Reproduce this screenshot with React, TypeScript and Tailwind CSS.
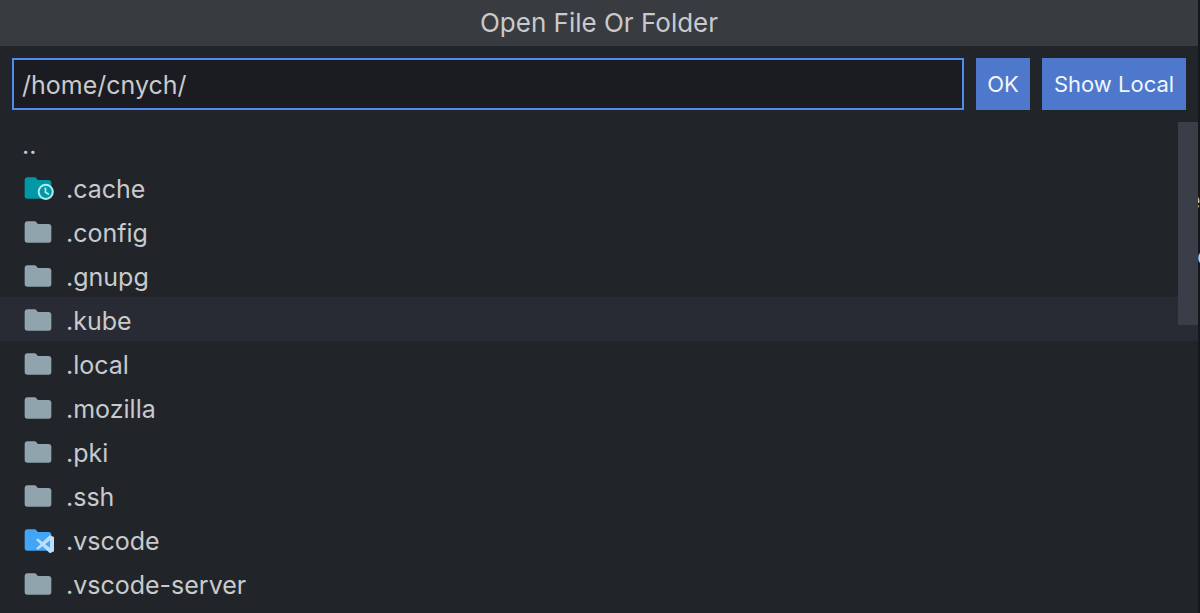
type FolderKind = 'plain' | 'cache' | 'vscode';

type Entry = { name: string; kind?: FolderKind };

const entries: Entry[] = [
  { name: '..' },
  { name: '.cache', kind: 'cache' },
  { name: '.config', kind: 'plain' },
  { name: '.gnupg', kind: 'plain' },
  { name: '.kube', kind: 'plain' },
  { name: '.local', kind: 'plain' },
  { name: '.mozilla', kind: 'plain' },
  { name: '.pki', kind: 'plain' },
  { name: '.ssh', kind: 'plain' },
  { name: '.vscode', kind: 'vscode' },
  { name: '.vscode-server', kind: 'plain' },
];

const folderColors: Record<FolderKind, string> = {
  plain: '#90a4ae',
  cache: '#0097a7',
  vscode: '#42a5f5',
};

function FolderIcon({ kind }: { kind: FolderKind }) {
  return (
    <svg viewBox="0 0 24 24" className="size-8 shrink-0" aria-hidden="true">
      <path
        d="M10 4H4c-1.11 0-2 .89-2 2v12a2 2 0 0 0 2 2h16a2 2 0 0 0 2-2V8c0-1.11-.9-2-2-2h-8l-2-2z"
        fill={folderColors[kind]}
      />
      {kind === 'cache' && (
        <g fill="none" stroke="#b2ebf2">
          <circle cx="17.8" cy="14.9" r="5.3" fill="#0097a7" strokeWidth="1.5" />
          <path d="M17.6 11.6v3.6l2.6 1.6" strokeWidth="1.3" />
        </g>
      )}
      {kind === 'vscode' && (
        <path
          d="M20.9 8.4 24 9.8v10.6L20.9 22l-5.5-5.3-3.4 2.7-1.5-1 3.3-3.3-3.3-3.3 1.5-1 3.4 2.7zm.1 4-3.6 2.7 3.6 2.8z"
          fill="#bbdefb"
        />
      )}
    </svg>
  );
}

export default function App() {
  return (
    <div className="flex h-screen overflow-hidden bg-[#15181b] font-[Inter,sans-serif] text-[#c8cacd]">
      <main className="flex min-w-0 flex-1 flex-col bg-[#212529]">
        <header className="flex h-[46px] shrink-0 items-center justify-center bg-[#383b40]">
          <h1 className="text-[26px] leading-8">Open File Or Folder</h1>
        </header>

        <form
          className="flex shrink-0 gap-3 px-3 pt-3 pb-[11px]"
          onSubmit={(event) => event.preventDefault()}
        >
          <input
            type="text"
            aria-label="Path"
            defaultValue="/home/cnych/"
            className="h-[52px] min-w-0 flex-1 border-2 border-[#528bea] bg-[#1b1c21] px-2 pt-0.5 text-[25px] outline-none"
          />
          <button type="submit" className="h-[52px] w-[54px] bg-[#4d78cc] text-[22px] text-[#f2f5fb]">
            OK
          </button>
          <button type="button" className="h-[52px] w-36 bg-[#4d78cc] text-[22px] text-[#f2f5fb]">
            Show Local
          </button>
        </form>

        <div className="relative min-h-0 flex-1 overflow-hidden">
          <ul>
            {entries.map((entry) => (
              <li key={entry.name}>
                <a
                  href="#"
                  className={
                    entry.name === '.kube'
                      ? 'flex h-11 items-center gap-3 bg-[#282b34] pt-0.5 pl-[22px] text-[25px] leading-8'
                      : 'flex h-11 items-center gap-3 pt-0.5 pl-[22px] text-[25px] leading-8'
                  }
                >
                  {entry.kind && <FolderIcon kind={entry.kind} />}
                  <span className="pt-0.5">{entry.name}</span>
                </a>
              </li>
            ))}
          </ul>
          <div className="absolute top-px right-0 h-[203px] w-5 bg-[#3a3e49]" />
        </div>
      </main>

      <aside className="w-0.5 shrink-0 overflow-hidden pt-[184px] text-[25px] leading-8" aria-hidden="true">
        <p className="-ml-3">e</p>
        <p className="-ml-px pt-6">c</p>
      </aside>
    </div>
  );
}
